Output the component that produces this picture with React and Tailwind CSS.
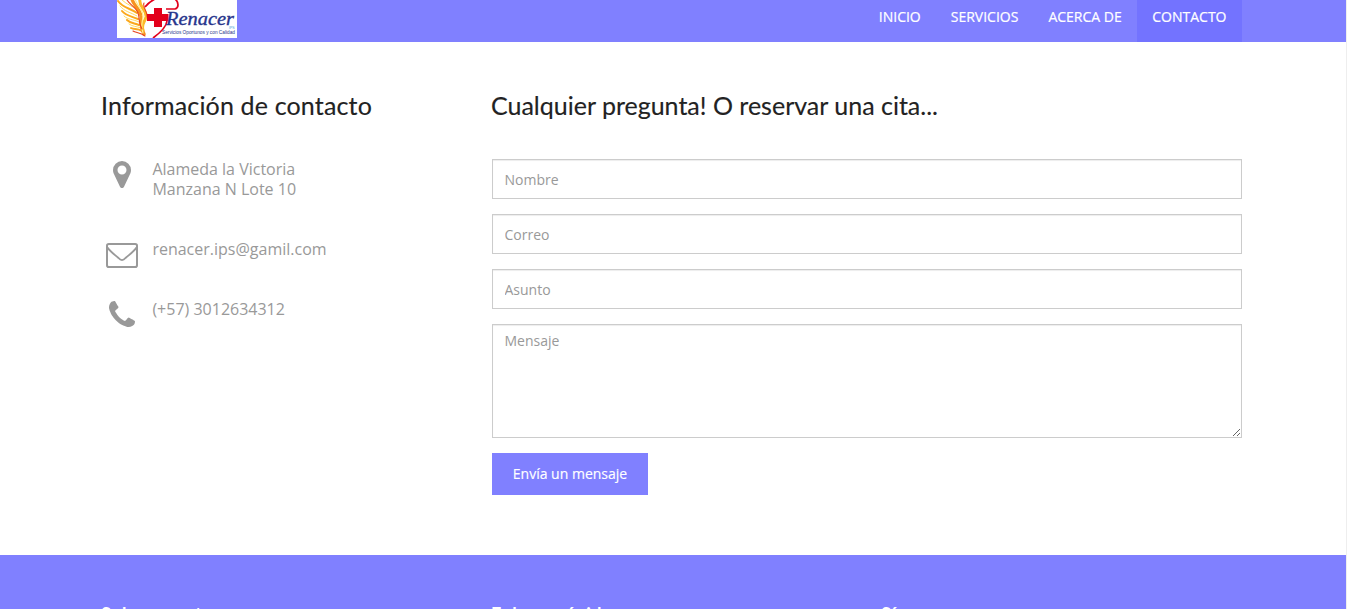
import React from "react";

const nav = ["INICIO", "SERVICIOS", "ACERCA DE", "CONTACTO"];
const field =
  "block h-10 w-full border border-[#cccccc] bg-white pr-3 pl-[11.5px] text-sm text-[#555555] shadow-[inset_0_1px_1px_rgba(0,0,0,0.075)] placeholder:text-[#999999] outline-none";

function Logo() {
  return (
    <svg width="120" height="38" viewBox="0 0 120 38" className="block bg-white">
      <g fill="none" strokeLinecap="round">
        <path d="M1 1C6 8 13 8 20 13M5 11C9 16 14 16 21 19M10 20C13 23 17 23 22 25M14 28C17 30 20 28 25 31" stroke="#fba81c" strokeWidth="2" />
        <path d="M5 0C10 5 16 6 22 11M3 6C8 12 13 12 20 16M7 16C11 20 16 19 22 22M12 24C16 27 19 26 24 28" stroke="#ffdc5c" strokeWidth="1" />
        <path d="M15 -1C16 5 23 9 24 16C25 21 22 25 27 34" stroke="#f7931e" strokeWidth="3.4" />
        <path d="M23 -1C21 7 30 9 29 17C28 22 24 24 26 30" stroke="#fcb929" strokeWidth="3" />
        <path d="M18 -1C20 6 26 9 26 16C26 22 23 24 26 33" stroke="#ffef8a" strokeWidth="1.2" />
        <path d="M10 0C13 5 19 7 21 13M27 3C25 7 31 12 30 17M16 31C19 33 23 32 28 36M21 13C23 18 21 23 25 29" stroke="#e8431f" strokeWidth="1.1" />
      </g>
      <path d="M37 8h8v6h6.500v7h-6.500v6h-8v-6h-7v-7h7z" fill="#e3001b" />
      <path d="M28 7C31 3 34 1 38 -1M58 -1C62 2 62 8 58 9H49M50 21C49 28 43 33 36 38" fill="none" stroke="#e3001b" strokeWidth="1.7" />
      <text x="49" y="25" fontFamily="Liberation Serif, serif" fontSize="19" fontStyle="italic" fill="#27358c" stroke="#27358c" strokeWidth="0.35" textLength="68" lengthAdjust="spacingAndGlyphs">Renacer</text>
      <text x="112" y="29" fontFamily="Liberation Sans, sans-serif" fontSize="3.500" fill="#3aa0d8">IPS</text>
      <text x="45" y="33.500" fontFamily="Liberation Sans, sans-serif" fontSize="5" fill="#27358c" textLength="73" lengthAdjust="spacingAndGlyphs">Servicios Oportunos y con Calidad</text>
    </svg>
  );
}

function Pin() {
  return (
    <svg width="18" height="27" viewBox="0 0 1024 1536" fill="#999999">
      <path d="M768 512q0-106-75-181t-181-75-181 75-75 181 75 181 181 75 181-75 75-181zm256 0q0 109-33 179l-364 774q-16 33-47.500 52t-67.500 19-67.500-19-46.500-52l-365-774q-33-70-33-179 0-212 150-362t362-150 362 150 150 362z" />
    </svg>
  );
}

function Mail() {
  return (
    <svg width="32" height="25" viewBox="0 0 32 25" fill="none" stroke="#999999" strokeWidth="2">
      <rect x="1" y="1" width="30" height="23" rx="1.800" />
      <path d="M1.500 4.500C4 8.500 8.500 11.500 12.500 15Q16 19.200 19.500 15C23.500 11.500 28 8.500 30.500 4.500" strokeWidth="1.900" />
    </svg>
  );
}

function Phone() {
  return (
    <svg width="26" height="26" viewBox="0 0 1408 1408" fill="#999999">
      <path d="M1408 1112q0 27-10 70.500t-21 68.500q-21 50-122 106-94 51-186 51-27 0-53-3.500t-57.500-12.500-47-14.500-55.500-20.500-49-18q-98-35-175-83-127-79-264-216t-216-264q-48-77-83-175-3-9-18-49t-20.500-55.500-14.500-47-12.500-57.500-3.500-53q0-92 51-186 56-101 106-122 25-11 68.500-21t70.500-10q14 0 21 3 18 6 53 76 11 19 30 54t35 63.500 31 53.500q3 4 17.500 25t21.500 35.500 7 28.500q0 20-28.500 50t-62 55-62 53-28.500 46q0 9 5 22.500t8.500 20.500 14 24 11.500 19q76 137 174 235t235 174q2 1 19 11.500t24 14 20.500 8.500 22.500 5q18 0 46-28.500t53-62 55-62 50-28.500q14 0 28.500 7t35.500 21.500 25 17.500q25 15 53.500 31t63.500 35 54 30q70 35 76 53 3 7 3 21z" />
    </svg>
  );
}

export default function App() {
  return (
    <div className="flex h-[609px] w-[1347px] flex-col overflow-hidden border-r border-[#eeeeee] bg-white font-['Open_Sans',sans-serif]">
      <header className="flex h-[42px] shrink-0 justify-between bg-[#8080ff] pr-[104px] pl-[117px]">
        <Logo />
        <nav className="flex">
          {nav.map((item) => (
            <a
              key={item}
              href="#"
              className={
                "pt-[7px] text-sm leading-5 font-normal text-white [-webkit-text-stroke:0.2px_white] " +
                (item === "CONTACTO" ? "bg-[#7373ff] pr-[15.5px] pl-[15.5px]" : "pr-[15px] pl-[15px]")
              }
            >
              {item}
            </a>
          ))}
        </nav>
      </header>

      <main className="flex h-[513px] shrink-0 pl-[101px]">
        <section className="w-[391px] pt-[48px]">
          <h2 className="font-['Lato',sans-serif] text-[25px] leading-[30px] tracking-[0.16px] whitespace-nowrap text-[#222222] [-webkit-text-stroke:0.15px_#222222]">
            Información de contacto
          </h2>
          <ul className="mt-[39px] text-base leading-5 text-[#999999]">
            <li className="flex h-20">
              <span className="flex w-[41px] justify-center pt-0.5"><Pin /></span>
              <p className="pl-[10.4px]">Alameda la Victoria<br />Manzana N Lote 10</p>
            </li>
            <li className="flex h-[60px]">
              <span className="flex w-[41px] pt-1 pl-[5px]"><Mail /></span>
              <p className="pl-[10.4px]">renacer.ips@gamil.com</p>
            </li>
            <li className="flex">
              <span className="flex w-[41px] justify-center pt-0.5"><Phone /></span>
              <p className="pl-[10.4px]">(+57) 3012634312</p>
            </li>
          </ul>
        </section>

        <section className="w-[750px] pt-[48px]">
          <h2 className="-ml-px font-['Lato',sans-serif] text-[25px] leading-[30px] whitespace-nowrap text-[#222222] [-webkit-text-stroke:0.15px_#222222]">
            Cualquier pregunta! O reservar una cita...
          </h2>
          <form className="mt-[39px] flex flex-col items-start gap-[15px]">
            <input className={field} placeholder="Nombre" />
            <input className={field} placeholder="Correo" />
            <input className={field} placeholder="Asunto" />
            <textarea
              className="block h-[114px] w-full resize border border-[#cccccc] bg-white py-1.5 pr-3 pl-[11.5px] text-sm leading-5 text-[#555555] shadow-[inset_0_1px_1px_rgba(0,0,0,0.075)] outline-none placeholder:text-[#999999]"
              placeholder="Mensaje"
            />
            <button type="button" className="h-[42px] w-[156px] bg-[#8080ff] text-sm text-white [-webkit-text-stroke:0.15px_white]">
              Envía un mensaje
            </button>
          </form>
        </section>
      </main>

      <footer className="flex h-[54px] shrink-0 overflow-hidden bg-[#8080ff] pt-[47px] pl-[101px] font-['Lato',sans-serif] text-lg leading-6 font-bold tracking-[0.45px] text-white">
        <h3 className="w-[390px]">Sobre nosotros</h3>
        <h3 className="w-[390px]">Enlaces rápidos</h3>
        <h3>Síguenos</h3>
      </footer>
    </div>
  );
}
